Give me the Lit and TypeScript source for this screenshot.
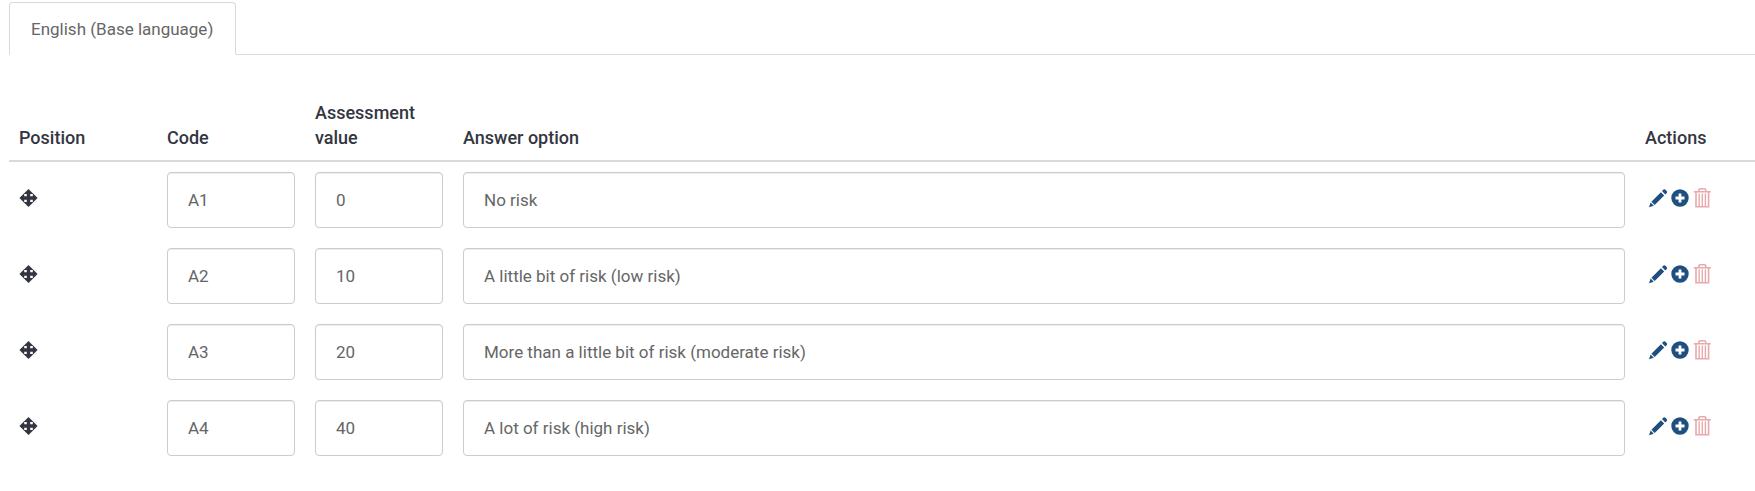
import { LitElement, html, css, svg } from "lit";
import { customElement, state } from "lit/decorators.js";

interface Answer {
  code: string;
  value: string;
  text: string;
}

const moveIcon = html`<svg class="icon" viewBox="0 0 20 20" aria-hidden="true">
  ${svg`<path d="M9.500 1l5 5h-3.300v2.300h2.600V5.200L18.600 10l-4.800 4.800v-3.100h-2.600V14h3.300l-5 5-5-5h3.300v-2.300H5.200v3.100L.400 10l4.800-4.800v3.100h2.600V6H4.500z"/>`}
</svg>`;

const pencilIcon = html`<svg class="icon" viewBox="0 0 20 20" aria-hidden="true">
  ${svg`<path d="M15.500 1.600a1.200 1.200 0 0 1 1.700 0l1.600 1.600a1.200 1.200 0 0 1 0 1.700l-1.500 1.500-3.300-3.300zM12.900 4.200l3.300 3.300-9.500 9.500-3.300-3.300zM2.600 14.600l3.200 3.200L1 19.200z"/>`}
</svg>`;

const plusIcon = html`<svg class="icon" viewBox="0 0 20 20" aria-hidden="true">
  ${svg`<path fill-rule="evenodd" d="M10 1.300a8.700 8.700 0 1 0 0 17.400a8.700 8.700 0 0 0 0-17.400zM8.600 5.500h2.800v3.100h3.100v2.800h-3.100v3.100H8.600v-3.100H5.500V8.600h3.100z"/>`}
</svg>`;

const trashIcon = html`<svg class="icon" viewBox="0 0 20 20" aria-hidden="true">
  ${svg`<path fill="none" stroke="currentColor" stroke-width="1.600" d="M1.700 3.800h17M6.800 3.800V2.300Q6.800.800 8.300.800h4q1.500 0 1.500 1.500v1.500M4 4v14.700h12.600V4"/>
  <path fill="none" stroke="currentColor" stroke-width="1.400" d="M7.200 5.500v12.500M10.300 5.500v12.500M13.400 5.500v12.500"/>`}
</svg>`;

@customElement("app-root")
export class AppRoot extends LitElement {
  static styles = css`
    :host {
      display: block;
      padding: 2px 0 20px 9px;
      background: #fff;
      color: #666;
      font: 17px/25px Roboto, sans-serif;
    }
    .tabs {
      display: flex;
      margin: 0 0 35px;
      padding: 0;
      list-style: none;
      border-bottom: 1px solid #d9d9d9;
    }
    .tab {
      display: block;
      margin-bottom: -1px;
      padding: 14px 22px 12px 21px;
      border: 1px solid #d9d9d9;
      border-bottom-color: #fff;
      border-radius: 4px 4px 0 0;
      color: inherit;
      text-decoration: none;
    }
    .answers {
      width: 100%;
      table-layout: fixed;
      border-collapse: separate;
      border-spacing: 0;
    }
    .narrow {
      width: 148px;
    }
    .actions-col {
      width: 120px;
    }
    .head {
      padding: 10px;
      box-sizing: border-box;
      border-bottom: 2px solid #d9d9d9;
      color: #333641;
      font-size: 18px;
      font-weight: 500;
      text-align: left;
      vertical-align: bottom;
    }
    .cell {
      padding: 10px;
      vertical-align: top;
    }
    .field {
      display: block;
      box-sizing: border-box;
      width: 100%;
      height: 56px;
      padding: 0 20px;
      border: 1px solid #ccc;
      border-radius: 4px;
      background: #fff;
      box-shadow: inset 0 1px 1px rgba(0, 0, 0, 0.075);
      color: inherit;
      font: inherit;
    }
    .tools {
      display: flex;
      gap: 2px;
      align-items: center;
      height: 52px;
    }
    .row-actions {
      padding-left: 3px;
    }
    .tool {
      display: block;
      padding: 0;
      border: 0;
      background: none;
      color: #1f4f7f;
      cursor: pointer;
    }
    .handle {
      color: #333641;
      cursor: move;
    }
    .delete {
      color: #e8a9ab;
    }
    .icon {
      display: block;
      width: 20px;
      height: 20px;
      fill: currentColor;
    }
  `;

  @state() private answers: Answer[] = [
    { code: "A1", value: "0", text: "No risk" },
    { code: "A2", value: "10", text: "A little bit of risk (low risk)" },
    { code: "A3", value: "20", text: "More than a little bit of risk (moderate risk)" },
    { code: "A4", value: "40", text: "A lot of risk (high risk)" },
  ];

  private row(a: Answer) {
    return html`<tr>
      <td class="cell">
        <div class="tools">
          <button class="tool handle" aria-label="Move ${a.code}">${moveIcon}</button>
        </div>
      </td>
      <td class="cell"><input class="field" aria-labelledby="code" .value=${a.code} /></td>
      <td class="cell"><input class="field" aria-labelledby="value" .value=${a.value} /></td>
      <td class="cell"><input class="field" aria-labelledby="option" .value=${a.text} /></td>
      <td class="cell">
        <div class="tools row-actions">
          <button class="tool" aria-label="Edit ${a.code}">${pencilIcon}</button>
          <button class="tool" aria-label="Add after ${a.code}">${plusIcon}</button>
          <button class="tool delete" aria-label="Delete ${a.code}">${trashIcon}</button>
        </div>
      </td>
    </tr>`;
  }

  render() {
    return html`
      <ul class="tabs">
        <li><a class="tab" href="#english">English (Base language)</a></li>
      </ul>
      <table class="answers" id="english">
        <thead>
          <tr>
            <th class="head narrow" scope="col">Position</th>
            <th class="head narrow" scope="col" id="code">Code</th>
            <th class="head narrow" scope="col" id="value">Assessment value</th>
            <th class="head" scope="col" id="option">Answer option</th>
            <th class="head actions-col" scope="col">Actions</th>
          </tr>
        </thead>
        <tbody>
          ${this.answers.map((a) => this.row(a))}
        </tbody>
      </table>
    `;
  }
}
